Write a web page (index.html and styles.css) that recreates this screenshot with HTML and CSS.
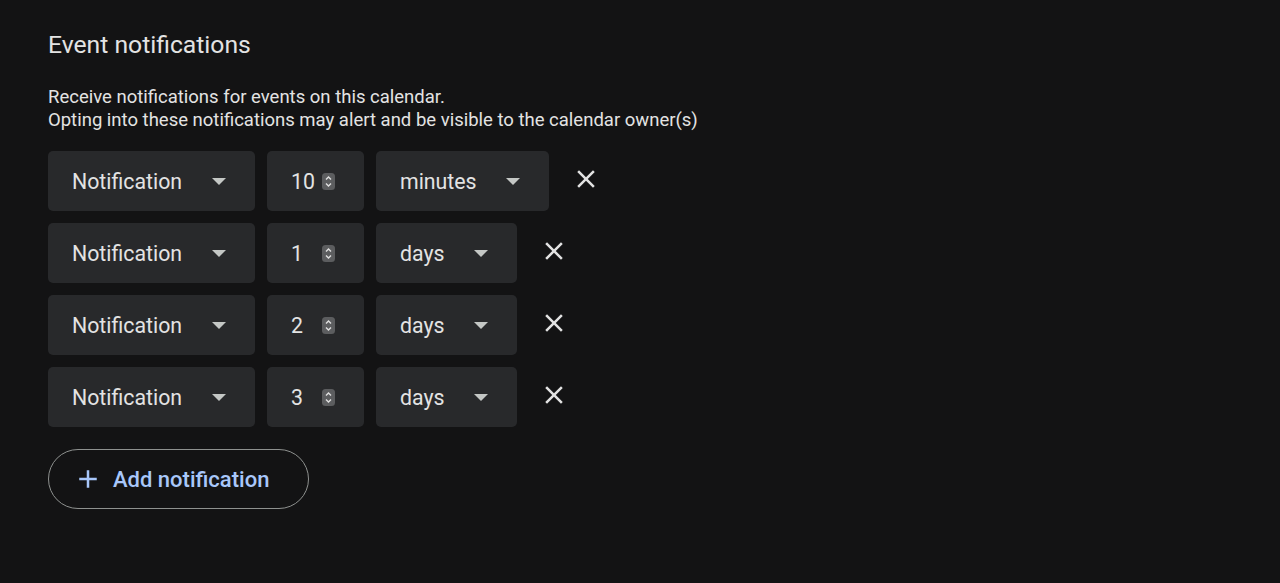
FILE: index.html
```html
<!DOCTYPE html>
<html>
<head>
<meta charset="utf-8">
<link rel="stylesheet" href="styles.css">
</head>
<body>
<main class="panel">
  <h2 class="title">Event notifications</h2>
  <p class="desc">Receive notifications for events on this calendar.<br>Opting into these notifications may alert and be visible to the calendar owner(s)</p>
  <div class="rows">
    <div class="row">
      <div class="box select type"><span>Notification</span><i class="caret"></i></div>
      <div class="box num"><span class="val">10</span><svg class="spin" viewBox="0 0 13 17" width="13" height="17"><rect width="13" height="17" rx="3.5" fill="#5c5d5f"/><path d="M4 6.5 L6.5 4 L9 6.5 M4 10.5 L6.5 13 L9 10.5" fill="none" stroke="#e0e0e0" stroke-width="1.4"/></svg></div>
      <div class="box select"><span>minutes</span><i class="caret"></i></div>
      <button class="close"><svg viewBox="0 0 24 24" width="30" height="30"><path d="M19 6.41L17.59 5 12 10.59 6.41 5 5 6.41 10.59 12 5 17.59 6.41 19 12 13.41 17.59 19 19 17.59 13.41 12z" fill="#e3e3e3"/></svg></button>
    </div>
    <div class="row">
      <div class="box select type"><span>Notification</span><i class="caret"></i></div>
      <div class="box num"><span class="val">1</span><svg class="spin" viewBox="0 0 13 17" width="13" height="17"><rect width="13" height="17" rx="3.5" fill="#5c5d5f"/><path d="M4 6.5 L6.5 4 L9 6.5 M4 10.5 L6.5 13 L9 10.5" fill="none" stroke="#e0e0e0" stroke-width="1.4"/></svg></div>
      <div class="box select"><span>days</span><i class="caret"></i></div>
      <button class="close"><svg viewBox="0 0 24 24" width="30" height="30"><path d="M19 6.41L17.59 5 12 10.59 6.41 5 5 6.41 10.59 12 5 17.59 6.41 19 12 13.41 17.59 19 19 17.59 13.41 12z" fill="#e3e3e3"/></svg></button>
    </div>
    <div class="row">
      <div class="box select type"><span>Notification</span><i class="caret"></i></div>
      <div class="box num"><span class="val">2</span><svg class="spin" viewBox="0 0 13 17" width="13" height="17"><rect width="13" height="17" rx="3.5" fill="#5c5d5f"/><path d="M4 6.5 L6.5 4 L9 6.5 M4 10.5 L6.5 13 L9 10.5" fill="none" stroke="#e0e0e0" stroke-width="1.4"/></svg></div>
      <div class="box select"><span>days</span><i class="caret"></i></div>
      <button class="close"><svg viewBox="0 0 24 24" width="30" height="30"><path d="M19 6.41L17.59 5 12 10.59 6.41 5 5 6.41 10.59 12 5 17.59 6.41 19 12 13.41 17.59 19 19 17.59 13.41 12z" fill="#e3e3e3"/></svg></button>
    </div>
    <div class="row">
      <div class="box select type"><span>Notification</span><i class="caret"></i></div>
      <div class="box num"><span class="val">3</span><svg class="spin" viewBox="0 0 13 17" width="13" height="17"><rect width="13" height="17" rx="3.5" fill="#5c5d5f"/><path d="M4 6.5 L6.5 4 L9 6.5 M4 10.5 L6.5 13 L9 10.5" fill="none" stroke="#e0e0e0" stroke-width="1.4"/></svg></div>
      <div class="box select"><span>days</span><i class="caret"></i></div>
      <button class="close"><svg viewBox="0 0 24 24" width="30" height="30"><path d="M19 6.41L17.59 5 12 10.59 6.41 5 5 6.41 10.59 12 5 17.59 6.41 19 12 13.41 17.59 19 19 17.59 13.41 12z" fill="#e3e3e3"/></svg></button>
    </div>
  </div>
  <button class="add"><svg viewBox="0 0 24 24" width="30" height="30"><path d="M19 13h-6v6h-2v-6H5v-2h6V5h2v6h6v2z" fill="#a8c7fa"/></svg><span>Add notification</span></button>
</main>
</body>
</html>
```
FILE: styles.css
```css
html, body {
  margin: 0;
  padding: 0;
  background: #131314;
}
body {
  font-family: Roboto, "Noto Sans", Arial, sans-serif;
  color: #e3e3e3;
  width: 1280px;
  height: 583px;
  overflow: hidden;
}
.panel {
  padding: 30px 48px 0 48px;
}
.title {
  margin: 0;
  font-size: 24.7px;
  font-weight: 400;
  line-height: 30px;
  color: #e3e3e3;
}
.desc {
  margin: 26px 0 0 0;
  font-size: 18.5px;
  line-height: 23px;
  color: #e3e3e3;
}
.rows {
  margin-top: 19px;
  display: flex;
  flex-direction: column;
  gap: 12px;
}
.row {
  display: flex;
  align-items: center;
  gap: 12px;
  height: 60px;
}
.box {
  height: 60px;
  box-sizing: border-box;
  background: #28292b;
  border-radius: 5px;
  display: flex;
  align-items: center;
  font-size: 21.3px;
  color: #e3e3e3;
}
.select {
  padding: 0 29px 0 24px;
  gap: 29px;
}
.type {
  width: 207px;
  justify-content: space-between;
}
.caret {
  display: block;
  width: 0;
  height: 0;
  border-left: 7px solid transparent;
  border-right: 7px solid transparent;
  border-top: 7px solid #c4c7c5;
  margin-top: 1px;
}
.num {
  width: 97px;
  padding: 0 29px 0 24px;
}
.val {
  flex: 1;
}
.spin {
  display: block;
}
.close {
  width: 50px;
  height: 60px;
  padding: 0;
  margin: 0;
  border: none;
  background: transparent;
  display: flex;
  align-items: center;
  justify-content: center;
  margin-top: -5px;
}
.close svg {
  display: block;
}
.add {
  margin-top: 22px;
  height: 60px;
  box-sizing: border-box;
  border: 1.25px solid #8e918f;
  border-radius: 30px;
  background: transparent;
  display: flex;
  align-items: center;
  gap: 10px;
  padding: 0 39px 0 24px;
  font-family: Roboto, "Noto Sans", Arial, sans-serif;
  font-size: 22px;
  font-weight: 500;
  color: #a8c7fa;
}
.add svg {
  display: block;
}
```
